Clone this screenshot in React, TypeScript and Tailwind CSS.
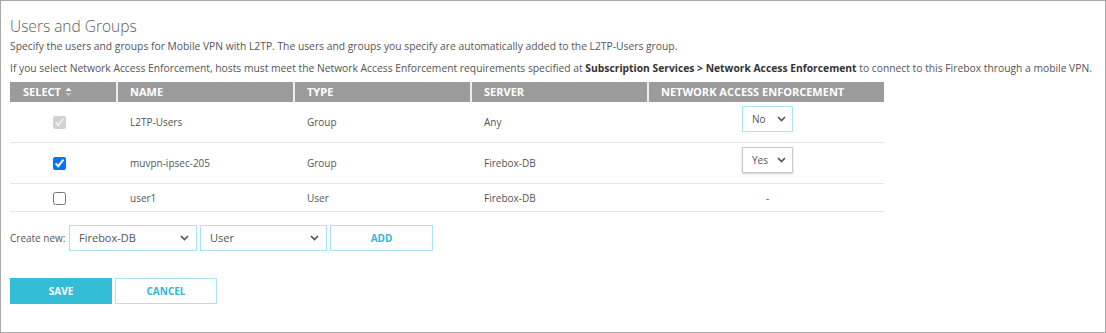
import React from 'react';

const font = { fontFamily: '"Open Sans", "Liberation Sans", sans-serif' };

function Chevron() {
  return (
    <svg width="9" height="6" viewBox="0 0 9 6">
      <path d="M1 1l3.5 3.5L8 1" fill="none" stroke="#555" strokeWidth="1.7" />
    </svg>
  );
}

function SortIcon() {
  return (
    <svg width="7" height="10" viewBox="0 0 7 10" className="ml-[4px]">
      <path d="M0.5 4L3.5 0.5L6.5 4Z" fill="#ffffff" />
      <path d="M0.5 6L3.5 9.5L6.5 6Z" fill="#c4c4c4" />
    </svg>
  );
}

function MiniSelect({ value, variant }: { value: string; variant: 'cyan' | 'gray' }) {
  return (
    <div
      className={
        'inline-flex items-center justify-between w-[51px] h-[26px] pl-[9px] pr-[6px] bg-white text-[10px] text-[#555] ' +
        (variant === 'cyan'
          ? 'border border-[#a9e4f0]'
          : 'border border-[#c9c9c9] shadow-[0_1px_2px_rgba(0,0,0,0.18)]')
      }
    >
      <span>{value}</span>
      <Chevron />
    </div>
  );
}

const rows = [
  { name: 'L2TP-Users', type: 'Group', server: 'Any', nae: 'No', check: 'disabled' },
  { name: 'muvpn-ipsec-205', type: 'Group', server: 'Firebox-DB', nae: 'Yes', check: 'checked' },
  { name: 'user1', type: 'User', server: 'Firebox-DB', nae: '-', check: 'none' },
];

export default function App() {
  return (
    <div style={font} className="w-[1106px] h-[333px] border border-[#a8a8a8] bg-white px-[9px] pt-[15px] text-[#555]">
      <h1 className="text-[15.5px] leading-[20px] font-light text-[#606060]">Users and Groups</h1>
      <p className="mt-[2px] text-[10.3px] leading-[16px] whitespace-nowrap text-[#555]">
        Specify the users and groups for Mobile VPN with L2TP. The users and groups you specify are automatically added to the L2TP-Users group.
      </p>
      <p className="mt-[6px] text-[10.3px] leading-[16px] whitespace-nowrap text-[#555]">
        If you select Network Access Enforcement, hosts must meet the Network Access Enforcement requirements specified at{' '}
        <b className="font-bold text-[#333]">Subscription Services &gt; Network Access Enforcement</b> to connect to this Firebox through a mobile VPN.
      </p>

      {/* Table */}
      <div className="mt-[6px] w-[874px]">
        <div className="grid grid-cols-[106px_177px_177px_177px_237px] h-[20px] bg-[#9b9b9b] text-white text-[11px] font-bold uppercase">
          <div className="flex items-center pl-[13px]">
            Select
            <SortIcon />
          </div>
          <div className="flex items-center pl-[12px] border-l-2 border-[#eeeeee]">Name</div>
          <div className="flex items-center pl-[12px] border-l-2 border-[#eeeeee]">Type</div>
          <div className="flex items-center pl-[12px] border-l-2 border-[#eeeeee]">Server</div>
          <div className="flex items-center pl-[12px] border-l-2 border-[#eeeeee]">Network Access Enforcement</div>
        </div>

        {rows.map((r) => {
          const hasSelect = r.nae !== '-';
          return (
            <div
              key={r.name}
              className={
                'grid grid-cols-[106px_177px_177px_177px_237px] border-b border-[#e6e6e6] text-[10px] text-[#555] ' +
                (hasSelect ? 'h-[41px]' : 'h-[28px]')
              }
            >
              <div className={'pl-[43px] ' + (hasSelect ? 'pt-[14px]' : 'pt-[8px]')}>
                {r.check === 'disabled' && <input type="checkbox" checked disabled readOnly className="block m-0 w-[13px] h-[13px]" />}
                {r.check === 'checked' && <input type="checkbox" checked readOnly className="block m-0 w-[13px] h-[13px]" />}
                {r.check === 'none' && <input type="checkbox" readOnly className="block m-0 w-[13px] h-[13px]" />}
              </div>
              <div className={'pl-[14px] leading-[16px] ' + (hasSelect ? 'pt-[12px]' : 'pt-[6px]')}>{r.name}</div>
              <div className={'pl-[14px] leading-[16px] ' + (hasSelect ? 'pt-[12px]' : 'pt-[6px]')}>{r.type}</div>
              <div className={'pl-[14px] leading-[16px] ' + (hasSelect ? 'pt-[12px]' : 'pt-[6px]')}>{r.server}</div>
              <div className={'flex justify-center pl-[4px] ' + (hasSelect ? 'pt-[4px]' : 'pt-[6px] leading-[16px]')}>
                {hasSelect ? <MiniSelect value={r.nae} variant={r.nae === 'No' ? 'cyan' : 'gray'} /> : <span>-</span>}
              </div>
            </div>
          );
        })}
      </div>

      {/* Create new */}
      <div className="mt-[13px] flex items-center gap-[3px] text-[10px]">
        <span className="w-[56px] whitespace-nowrap text-[#555]">Create new:</span>
        <div className="flex items-center justify-between w-[128px] h-[26px] border border-[#a9e4f0] pl-[9px] pr-[7px] text-[11px] text-[#555]">
          <span>Firebox-DB</span>
          <Chevron />
        </div>
        <div className="flex items-center justify-between w-[127px] h-[26px] border border-[#a9e4f0] pl-[9px] pr-[7px] text-[11px] text-[#555]">
          <span>User</span>
          <Chevron />
        </div>
        <button className="w-[103px] h-[26px] border border-[#a9e4f0] bg-white text-[10px] font-bold text-[#33b7d4]">ADD</button>
      </div>

      {/* Actions */}
      <div className="mt-[27px] flex gap-[3px]">
        <button className="w-[102px] h-[26px] bg-[#33bdd6] text-white text-[10px] font-bold">SAVE</button>
        <button className="w-[102px] h-[26px] border border-[#a9e4f0] bg-white text-[#33b7d4] text-[10px] font-bold">CANCEL</button>
      </div>
    </div>
  );
}
